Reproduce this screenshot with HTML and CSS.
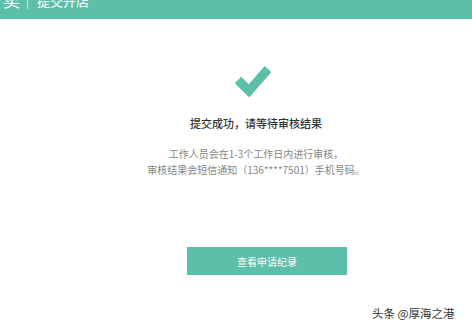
FILE: index.html
```html
<!DOCTYPE html>
<html lang="zh">
<head>
<meta charset="utf-8">
<link rel="stylesheet" href="styles.css">
</head>
<body>
<header class="topbar">
  <span class="logo">卖</span><span class="sep">|</span><span class="crumb">提交开店</span>
</header>
<main class="content">
  <svg class="check" width="42" height="36" viewBox="0 0 42 36">
    <polyline points="6,16 17,27 36,5" fill="none" stroke="#5cbfaa" stroke-width="9" stroke-linejoin="miter"/>
  </svg>
  <h1 class="title">提交成功，请等待审核结果</h1>
  <p class="desc">工作人员会在1-3个工作日内进行审核，<br>审核结果会短信通知（136****7501）手机号码。</p>
  <a class="btn">查看申请纪录</a>
</main>
<div class="watermark">头条 @厚海之港</div>
</body>
</html>
```
FILE: styles.css
```css
html, body {
  margin: 0;
  padding: 0;
  background: #ffffff;
  width: 472px;
  height: 329px;
  overflow: hidden;
  font-family: "Noto Sans CJK SC", "Noto Sans", sans-serif;
}
.topbar {
  height: 19px;
  background: #5cbfaa;
  display: flex;
  align-items: flex-end;
  overflow: hidden;
  color: #ffffff;
  padding-left: 3px;
}
.logo {
  font-size: 17px;
  line-height: 17px;
  margin-bottom: 11px;
}
.sep {
  font-size: 11px;
  line-height: 11px;
  margin: 0 8px 12px 6px;
  opacity: 0.8;
}
.crumb {
  font-size: 13px;
  line-height: 13px;
  margin-bottom: 12px;
}
.content {
  display: flex;
  flex-direction: column;
  align-items: center;
  padding-left: 40px;
}
.check {
  display: block;
  margin-top: 45px;
  margin-left: -6px;
}
.title {
  margin: 16px 0 0 0;
  font-size: 11px;
  line-height: 14px;
  font-weight: 500;
  color: #333333;
}
.desc {
  margin: 16px 0 0 0;
  font-size: 10px;
  line-height: 16px;
  color: #858585;
  text-align: center;
}
.btn {
  display: flex;
  align-items: center;
  justify-content: center;
  margin-top: 69px;
  margin-left: 22px;
  width: 160px;
  height: 28px;
  background: #5cbfaa;
  color: #ffffff;
  font-size: 10px;
}
.watermark {
  position: absolute;
  left: 372px;
  top: 305px;
  font-size: 11.5px;
  line-height: 16px;
  color: #333333;
}
```
